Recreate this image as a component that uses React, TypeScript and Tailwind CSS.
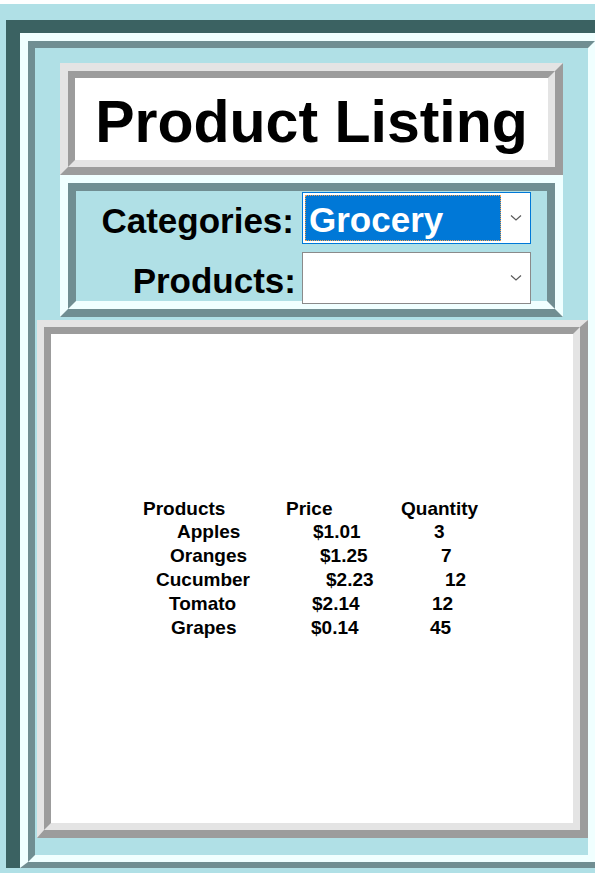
import React from 'react';

type Row = {
  name: string;
  price: string;
  qty: string;
  nameCls: string;
  priceCls: string;
  qtyCls: string;
};

const rows: Row[] = [
  { name: 'Apples', price: '$1.01', qty: '3', nameCls: 'pl-[34px]', priceCls: 'pl-[27px]', qtyCls: 'pl-[33px]' },
  { name: 'Oranges', price: '$1.25', qty: '7', nameCls: 'pl-[27px]', priceCls: 'pl-[34px]', qtyCls: 'pl-[40px]' },
  { name: 'Cucumber', price: '$2.23', qty: '12', nameCls: 'pl-[13px]', priceCls: 'pl-[40px]', qtyCls: 'pl-[44px]' },
  { name: 'Tomato', price: '$2.14', qty: '12', nameCls: 'pl-[26px]', priceCls: 'pl-[26px]', qtyCls: 'pl-[31px]' },
  { name: 'Grapes', price: '$0.14', qty: '45', nameCls: 'pl-[28px]', priceCls: 'pl-[25px]', qtyCls: 'pl-[29px]' },
];

function Chevron() {
  return (
    <svg width="12" height="8" viewBox="0 0 12 8" className="shrink-0">
      <polyline points="1,1.5 6,6 11,1.5" fill="none" stroke="#5a5a5a" strokeWidth="1.2" />
    </svg>
  );
}

function FakeSelect({ value, focused }: { value?: string; focused?: boolean }) {
  return (
    <div
      className={`w-[229px] h-[52px] bg-white border flex items-center ${
        focused ? 'border-[#0078d7]' : 'border-[#8a8a8a]'
      }`}
    >
      <div className="w-[200px] h-full p-[2px] shrink-0">
        {value && (
          <div className="h-full bg-[#0078d7] border border-dotted border-[#f0a050] flex items-center pl-[3px] pt-[2px]">
            <span className="text-white text-[35px] font-bold leading-none">{value}</span>
          </div>
        )}
      </div>
      <div className="flex-1 flex justify-center pr-[2px]">
        <Chevron />
      </div>
    </div>
  );
}

export default function App() {
  return (
    <div className="w-[595px] h-[873px] overflow-hidden bg-white font-['Liberation_Sans',Arial,sans-serif] text-black">
      <div className="mt-[4px] h-[869px] bg-[#b0e0e6] pl-[6px] pt-[16px]">
        {/* outer dark frame */}
        <div className="w-[620px] border-l-[14px] border-t-[13px] border-[#3b6262]">
          {/* ridge frame */}
          <div className="w-[583px] border-t-[8px] border-l-[8px] border-r-[8px] border-b-[6px] border-t-[#f0ffff] border-l-[#f0ffff] border-r-[#708e92] border-b-[#708e92]">
            <div className="border-[7px] border-t-[#708e92] border-l-[#708e92] border-r-[#f0ffff] border-b-[#f0ffff] bg-[#b0e0e6] pt-[15px] pb-[17px]">
              {/* title */}
              <div className="w-[503px] mx-auto border-[8px] border-t-[#e4e4e4] border-l-[#e4e4e4] border-r-[#9c9c9c] border-b-[#9c9c9c]">
                <div className="border-[7px] border-t-[#9c9c9c] border-l-[#9c9c9c] border-r-[#e4e4e4] border-b-[#e4e4e4] bg-white h-[96px] flex items-center justify-center pt-[6px]">
                  <h1 className="text-[59px] font-bold leading-none">Product Listing</h1>
                </div>
              </div>

              {/* selectors */}
              <div className="w-[503px] mx-auto border-[8px] border-t-[#f0ffff] border-l-[#f0ffff] border-r-[#f0ffff] border-b-[#708e92]">
                <div className="border-[8px] border-t-[#708e92] border-l-[#708e92] border-r-[#708e92] border-b-[#f0ffff] bg-[#b0e0e6] h-[126px] pt-[1px] grid grid-cols-[226px_229px] gap-y-[4px]">
                  <div className="flex items-center justify-end pr-[8px] pt-[3px] text-[35px] font-bold">Categories:</div>
                  <FakeSelect value="Grocery" focused />
                  <div className="flex items-center justify-end pr-[6px] pt-[3px] text-[35px] font-bold">Products:</div>
                  <FakeSelect />
                </div>
              </div>

              {/* list panel */}
              <div className="ml-[2px] mt-[3px] w-[551px] border-t-[7px] border-l-[7px] border-r-[8px] border-b-[8px] border-t-[#e4e4e4] border-l-[#e4e4e4] border-r-[#9c9c9c] border-b-[#9c9c9c]">
                <div className="border-[7px] border-t-[#9c9c9c] border-l-[#9c9c9c] border-r-[#e4e4e4] border-b-[#e4e4e4] bg-white h-[503px] pt-[164px] pl-[92px]">
                  <div className="grid grid-cols-[143px_115px_auto] text-[19px] font-bold leading-[22px]">
                    <div>Products</div>
                    <div>Price</div>
                    <div>Quantity</div>
                  </div>
                  {rows.map((r) => (
                    <div key={r.name} className="grid grid-cols-[143px_115px_auto] text-[19px] font-bold leading-[24px]">
                      <div className={r.nameCls}>{r.name}</div>
                      <div className={r.priceCls}>{r.price}</div>
                      <div className={r.qtyCls}>{r.qty}</div>
                    </div>
                  ))}
                </div>
              </div>
            </div>
          </div>
        </div>
      </div>
    </div>
  );
}
